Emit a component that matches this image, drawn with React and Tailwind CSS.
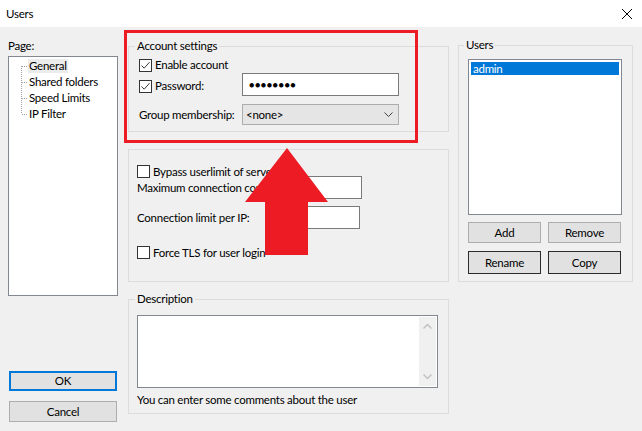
import React from 'react';

const font = { fontFamily: 'Lato, "Noto Sans", sans-serif' };

function Check({ checked }) {
  return (
    <span className="w-[13px] h-[13px] border border-[#333333] bg-white flex items-center justify-center shrink-0">
      {checked && (
        <svg width="11" height="11" viewBox="0 0 11 11">
          <path d="M1.5 5.5 L4.2 8.2 L9.5 2.2" fill="none" stroke="#3c3c3c" strokeWidth="1" />
        </svg>
      )}
    </span>
  );
}

function Btn({ children, className }) {
  return (
    <div className={"bg-[#e1e1e1] flex items-center justify-center text-black shrink-0 " + className}>
      {children}
    </div>
  );
}

function TreeLines() {
  return (
    <svg className="absolute left-0 top-0" width="30" height="70" shapeRendering="crispEdges">
      <line x1="12.5" y1="9" x2="12.5" y2="57" stroke="#a0a0a0" strokeDasharray="1 1" />
      {[9, 25, 41, 57].map((y) => (
        <line key={y} x1="13" y1={y + 0.5} x2="19" y2={y + 0.5} stroke="#a0a0a0" strokeDasharray="1 1" />
      ))}
    </svg>
  );
}

export default function App() {
  return (
    <div className="w-[642px] h-[431px] bg-[#f0f0f0] relative overflow-hidden text-[11.5px] tracking-[-0.25px] text-black whitespace-nowrap" style={font}>
      {/* title bar */}
      <div className="h-[27px] bg-white flex items-center justify-between pl-[6px] pr-[10px]">
        <span className="leading-[16px]">Users</span>
        <svg width="10" height="10" viewBox="0 0 10 10">
          <path d="M0 0 L10 10 M10 0 L0 10" stroke="#000" strokeWidth="1" />
        </svg>
      </div>

      <div className="flex">
        {/* left column */}
        <div className="w-[128px] shrink-0 pl-[8px] pt-[11px] flex flex-col">
          <div className="leading-[16px] h-[16px]">Page:</div>
          <div className="mt-[2px] w-[110px] h-[240px] bg-white border border-[#828790] relative">
            <TreeLines />
            <div className="flex flex-col pt-[1px] pl-[19px]">
              <div className="h-[16px] flex items-center">
                <span className="bg-[#ececec] px-[1px] h-[14px] leading-[14px]">General</span>
              </div>
              <div className="h-[16px] flex items-center pl-[1px]">Shared folders</div>
              <div className="h-[16px] flex items-center pl-[1px]">Speed Limits</div>
              <div className="h-[16px] flex items-center pl-[1px]">IP Filter</div>
            </div>
          </div>
          <Btn className="mt-[75px] ml-[1px] w-[108px] h-[20px] border-2 border-[#0078d7]">OK</Btn>
          <Btn className="mt-[10px] ml-[1px] w-[108px] h-[21px] border border-[#adadad]">Cancel</Btn>
        </div>

        {/* middle column */}
        <div className="w-[321px] shrink-0 pt-[11px] flex flex-col">
          <fieldset className="border border-[#dcdcdc] h-[94px]">
            <legend className="ml-[6px] px-[2px] leading-[16px]">Account settings</legend>
            <div className="flex flex-col pl-[10px]">
              <div className="mt-[3px] h-[16px] flex items-center gap-[3px]">
                <Check checked />
                <span>Enable account</span>
              </div>
              <div className="flex">
                <div className="w-[103px] shrink-0 mt-[5px] h-[16px] flex items-center gap-[3px]">
                  <Check checked />
                  <span>Password:</span>
                </div>
                <div className="w-[157px] h-[23px] bg-white border border-[#7a7a7a] flex items-center pl-[6px] text-[9px] tracking-[0.5px]">
                  ●●●●●●●●
                </div>
              </div>
              <div className="mt-[8px] flex items-center">
                <span className="w-[103px] shrink-0">Group membership:</span>
                <div className="w-[157px] h-[21px] bg-[#e5e5e5] border border-[#adadad] flex items-center justify-between pl-[3px] pr-[5px]">
                  <span>&lt;none&gt;</span>
                  <svg width="9" height="5" viewBox="0 0 9 5">
                    <path d="M0.5 0.5 L4.5 4.5 L8.5 0.5" fill="none" stroke="#404040" strokeWidth="1" />
                  </svg>
                </div>
              </div>
            </div>
          </fieldset>

          <div className="mt-[17px] h-[133px] border border-[#dcdcdc] flex flex-col pl-[8px] pt-[15px]">
            <div className="h-[13px] flex items-center gap-[3px]">
              <Check />
              <span>Bypass userlimit of server</span>
            </div>
            <div className="mt-[-2px] h-[23px] flex items-center">
              <span className="w-[145px] shrink-0">Maximum connection count:</span>
              <div className="w-[80px] h-[23px] bg-white border border-[#7a7a7a]" />
            </div>
            <div className="mt-[7px] h-[23px] flex items-center">
              <span className="w-[145px] shrink-0">Connection limit per IP:</span>
              <div className="w-[78px] h-[23px] bg-white border border-[#7a7a7a]" />
            </div>
            <div className="mt-[17px] h-[13px] flex items-center gap-[3px]">
              <Check />
              <span>Force TLS for user login</span>
            </div>
          </div>

          <fieldset className="mt-[9px] h-[123px] border border-[#dcdcdc]">
            <legend className="ml-[6px] px-[2px] leading-[16px]">Description</legend>
            <div className="flex flex-col pl-[8px]">
              <div className="mt-[8px] w-[301px] h-[73px] bg-white border border-[#828790] flex justify-end p-[1px]">
                <div className="w-[17px] h-full bg-[#f0f0f0] flex flex-col items-center justify-between py-[7px]">
                  <svg width="9" height="5" viewBox="0 0 9 5">
                    <path d="M0.5 4.5 L4.5 0.5 L8.5 4.5" fill="none" stroke="#c2c2c2" strokeWidth="1.5" />
                  </svg>
                  <svg width="9" height="5" viewBox="0 0 9 5">
                    <path d="M0.5 0.5 L4.5 4.5 L8.5 0.5" fill="none" stroke="#c2c2c2" strokeWidth="1.5" />
                  </svg>
                </div>
              </div>
              <div className="mt-[4px] h-[16px] leading-[16px]">You can enter some comments about the user</div>
            </div>
          </fieldset>
        </div>

        {/* right column */}
        <div className="ml-[9px] pt-[10px]">
          <fieldset className="w-[175px] h-[245px] border border-[#dcdcdc]">
            <legend className="ml-[5px] px-[2px] leading-[16px]">Users</legend>
            <div className="flex flex-col pl-[9px]">
              <div className="mt-[6px] w-[154px] h-[156px] bg-white border border-[#828790] p-[2px]">
                <div className="h-[13px] bg-[#0078d7] text-white leading-[13px] pl-[2px]">admin</div>
              </div>
              <div className="mt-[7px] flex gap-[7px]">
                <Btn className="w-[73px] h-[21px] border border-[#adadad]">Add</Btn>
                <Btn className="w-[73px] h-[21px] border border-[#adadad]">Remove</Btn>
              </div>
              <div className="mt-[8px] flex gap-[7px]">
                <Btn className="w-[73px] h-[23px] border border-[#2b2b2b]">Rename</Btn>
                <Btn className="w-[73px] h-[23px] border border-[#2b2b2b]">Copy</Btn>
              </div>
            </div>
          </fieldset>
        </div>
      </div>

      {/* annotation overlay */}
      <div className="absolute left-[124px] top-[30px] w-[294px] h-[113px] border-[3px] border-[#ed1c24] pointer-events-none" />
      <svg className="absolute left-0 top-0 pointer-events-none" width="642" height="431">
        <polygon points="287,148 328,202 308,202 308,255 265,255 265,202 245,202" fill="#ed1c24" />
      </svg>
    </div>
  );
}
